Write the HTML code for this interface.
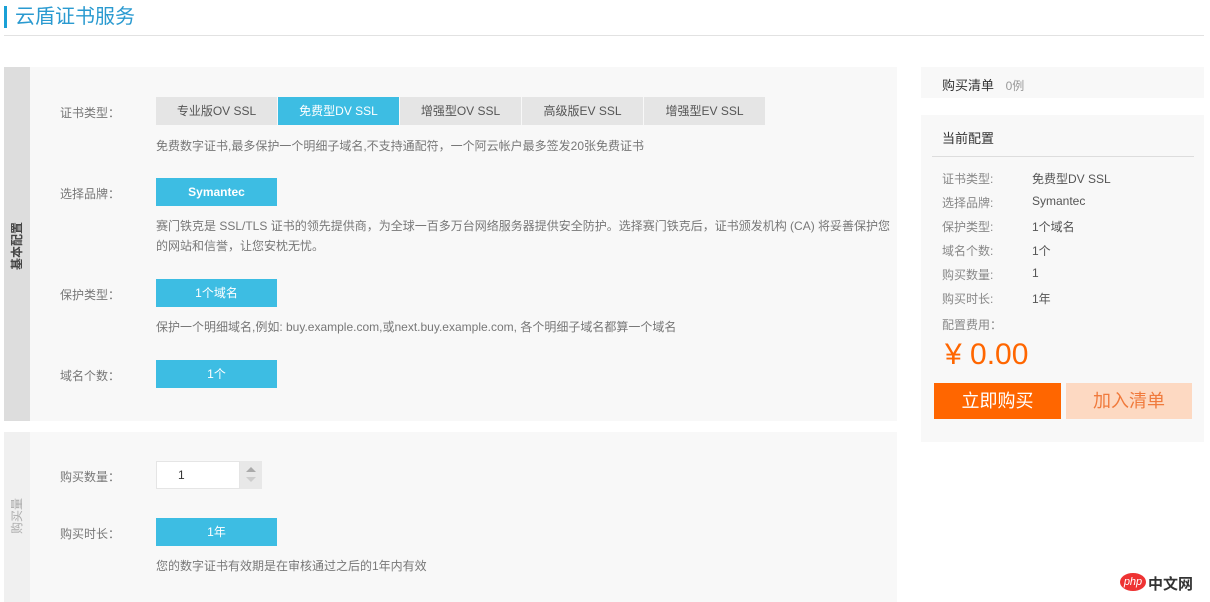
<!DOCTYPE html>
<html><head><meta charset="utf-8"><style>
*{margin:0;padding:0;box-sizing:border-box}
body{width:1210px;height:602px;background:#fff;font-family:"Liberation Sans","Noto Sans CJK SC",sans-serif;position:relative;overflow:hidden;color:#666;font-size:12px}
.a{position:absolute}
.title{left:4px;top:6px;height:22px;border-left:3px solid #19a0d6;padding-left:8px;font-size:20px;line-height:22px;color:#2a9ad0}
.hr{left:4px;top:35px;width:1200px;height:1px;background:#e2e2e2}
.p{background:#f8f8f8}
.side{background:#ddd}
.lbl{color:#777;font-size:12px}
.btn{background:#3dbde3;color:#fff;width:121px;height:28px;line-height:28px;text-align:center;font-size:12px}
.tab{background:#e5e5e5;color:#555;width:121px;height:28px;line-height:28px;text-align:center;font-size:12px;position:absolute;top:97px}
.desc{color:#777;font-size:12px;line-height:20px}
.rt{transform:rotate(-90deg);transform-origin:center;width:60px;height:16px;line-height:16px;text-align:center;font-size:12px;font-weight:bold;white-space:nowrap}
.k{left:942px;color:#888}
.v{left:1032px;color:#555}
</style></head><body>
<div class="a title">云盾证书服务</div>
<div class="a hr"></div>

<div class="a p" style="left:4px;top:67px;width:893px;height:354px"></div>
<div class="a side" style="left:4px;top:67px;width:26px;height:354px"></div>
<div class="a rt" style="left:-13px;top:238px;color:#444">基本配置</div>

<div class="a lbl" style="left:60px;top:104px">证书类型：</div>
<div class="tab" style="left:156px">专业版OV SSL</div>
<div class="tab" style="left:278px;background:#3dbde3;color:#fff">免费型DV SSL</div>
<div class="tab" style="left:400px">增强型OV SSL</div>
<div class="tab" style="left:522px">高级版EV SSL</div>
<div class="tab" style="left:644px">增强型EV SSL</div>
<div class="a desc" style="left:156px;top:136px">免费数字证书,最多保护一个明细子域名,不支持通配符，一个阿云帐户最多签发20张免费证书</div>

<div class="a lbl" style="left:60px;top:185px">选择品牌：</div>
<div class="a btn" style="left:156px;top:178px;font-weight:bold">Symantec</div>
<div class="a desc" style="left:156px;top:216px;width:736px">赛门铁克是 SSL/TLS 证书的领先提供商，为全球一百多万台网络服务器提供安全防护。选择赛门铁克后，证书颁发机构 (CA) 将妥善保护您的网站和信誉，让您安枕无忧。</div>

<div class="a lbl" style="left:60px;top:286px">保护类型：</div>
<div class="a btn" style="left:156px;top:279px">1个域名</div>
<div class="a desc" style="left:156px;top:317px">保护一个明细域名,例如: buy.example.com,或next.buy.example.com, 各个明细子域名都算一个域名</div>

<div class="a lbl" style="left:60px;top:367px">域名个数：</div>
<div class="a btn" style="left:156px;top:360px">1个</div>

<div class="a p" style="left:4px;top:432px;width:893px;height:170px"></div>
<div class="a" style="left:4px;top:432px;width:26px;height:170px;background:#f0f0f0"></div>
<div class="a rt" style="left:-13px;top:508px;color:#aaa;font-weight:normal">购买量</div>

<div class="a lbl" style="left:60px;top:468px">购买数量：</div>
<div class="a" style="left:156px;top:461px;width:84px;height:28px;background:#fff;border:1px solid #e5e5e5;line-height:26px;padding-left:21px;color:#333">1</div>
<div class="a" style="left:240px;top:461px;width:22px;height:28px;background:#e8e8e8"></div>
<div class="a" style="left:246px;top:467px;width:0;height:0;border-left:5px solid transparent;border-right:5px solid transparent;border-bottom:5px solid #aaa"></div>
<div class="a" style="left:246px;top:477px;width:0;height:0;border-left:5px solid transparent;border-right:5px solid transparent;border-top:5px solid #ccc"></div>

<div class="a lbl" style="left:60px;top:525px">购买时长：</div>
<div class="a btn" style="left:156px;top:518px">1年</div>
<div class="a desc" style="left:156px;top:556px">您的数字证书有效期是在审核通过之后的1年内有效</div>

<div class="a p" style="left:921px;top:67px;width:283px;height:31px"></div>
<div class="a" style="left:942px;top:75px;font-size:13px;color:#333">购买清单 <span style="color:#999;font-size:12px;margin-left:8px">0例</span></div>

<div class="a p" style="left:921px;top:115px;width:283px;height:327px"></div>
<div class="a" style="left:942px;top:128px;font-size:13px;color:#333">当前配置</div>
<div class="a" style="left:932px;top:156px;width:262px;height:1px;background:#ddd"></div>
<div class="a k" style="top:170px">证书类型:</div><div class="a v" style="top:170px">免费型DV SSL</div>
<div class="a k" style="top:194px">选择品牌:</div><div class="a v" style="top:194px">Symantec</div>
<div class="a k" style="top:218px">保护类型:</div><div class="a v" style="top:218px">1个域名</div>
<div class="a k" style="top:242px">域名个数:</div><div class="a v" style="top:242px">1个</div>
<div class="a k" style="top:266px">购买数量:</div><div class="a v" style="top:266px">1</div>
<div class="a k" style="top:290px">购买时长:</div><div class="a v" style="top:290px">1年</div>
<div class="a k" style="top:316px">配置费用：</div>
<div class="a" style="left:945px;top:337px;font-size:30px;color:#f60;line-height:36px">¥ 0.00</div>
<div class="a" style="left:934px;top:383px;width:127px;height:36px;background:#f60;color:#fff;font-size:18px;line-height:36px;text-align:center">立即购买</div>
<div class="a" style="left:1066px;top:383px;width:126px;height:36px;background:#fdd9c2;color:#f07a3c;font-size:18px;line-height:36px;text-align:center">加入清单</div>

<div class="a" style="left:1120px;top:573px;width:26px;height:18px;background:#e33;border-radius:50%;color:#fff;font-size:11px;font-style:italic;text-align:center;line-height:18px">php</div>
<div class="a" style="left:1148px;top:573px;font-size:15px;color:#333;font-weight:bold">中文网</div>
</body></html>
